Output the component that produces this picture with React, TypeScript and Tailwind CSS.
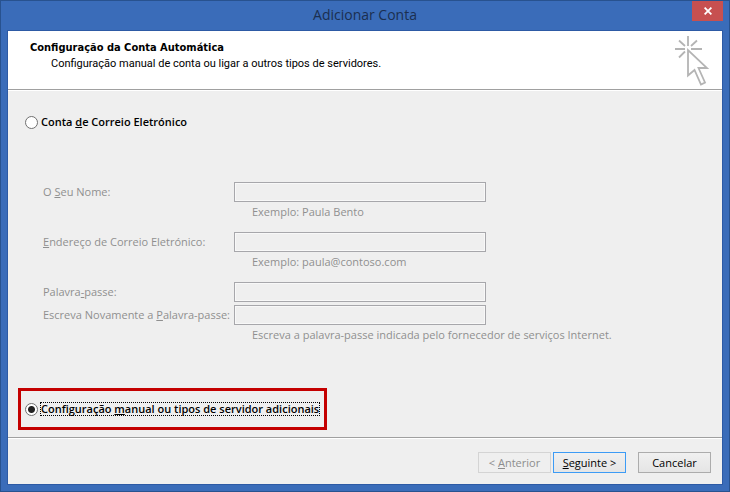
import { useState } from 'react';
import type { ReactNode } from 'react';

const ClickIcon = () => (
    <svg className="w-9 h-[52px]" viewBox="0 0 36 52" fill="none" stroke="#b4b4b4" strokeWidth="1.800" aria-hidden="true">
        <path d="M14 1v10M1 14h10M17 14h11M5 5.500l6 5.500M23 5.500l-6 5.500M5 22.500l6-6" />
        <path d="M14 15v25.500l6.500-5.500 6.500 14.500 4-2-6.500-14.500h8.500z" />
    </svg>
);

const CloseIcon = () => (
    <svg className="w-2 h-2" viewBox="0 0 8 8" stroke="#fff" strokeWidth="1.800" aria-hidden="true">
        <path d="M.6.6l6.800 6.800M7.400.6L.6 7.400" />
    </svg>
);

interface FieldProps {
    id: string;
    label: ReactNode;
    type?: string;
    hint?: string;
}

const Field = ({ id, label, type = 'text', hint }: FieldProps) => (
    <div className="grid grid-cols-[191px_252px_1fr] auto-rows-[20px] items-center whitespace-nowrap">
        <label htmlFor={id}>{label}</label>
        <input
            id={id}
            type={type}
            disabled
            className="h-5 w-full border border-[#a7a7ab] bg-[#efefef] px-1 shadow-[inset_0_0_0_1px_#f8f8f8]"
        />
        {hint && <p className="col-start-2 col-span-2 pl-[18px]">{hint}</p>}
    </div>
);

const radioClass =
    'appearance-none size-[13px] shrink-0 rounded-full border border-[#707070] bg-white checked:bg-[radial-gradient(circle,#222_0_3px,#fff_4px)]';

export default function App() {
    const [mode, setMode] = useState('manual');

    return (
        <div className="min-h-screen flex flex-col border border-[#28528f] bg-[#3a6cb9] px-[6px] pb-[6px] font-['Open_Sans',sans-serif] text-[11px] leading-4 text-black">
            {/* Barra de título */}
            <header className="grid grid-cols-[31px_1fr_31px] h-[29px] items-start">
                <h1 className="col-start-2 pt-1 text-center text-[14px] leading-5 text-[#1b2f50]">Adicionar Conta</h1>
                <button type="button" aria-label="Fechar" className="flex h-5 w-[31px] items-center justify-center bg-[#c75050]">
                    <CloseIcon />
                </button>
            </header>

            <main className="flex flex-1 flex-col border border-[#2d5aa5] bg-[#efefef]">
                <div className="flex h-[58px] justify-between bg-white pl-[22px] pr-3">
                    <div className="pt-[9px]">
                        <h2 className="font-['DejaVu_Sans_Condensed','DejaVu_Sans',sans-serif] font-bold">Configuração da Conta Automática</h2>
                        <p className="pl-[21px] font-['Roboto',sans-serif]">Configuração manual de conta ou ligar a outros tipos de servidores.</p>
                    </div>
                    <div className="pt-1">
                        <ClickIcon />
                    </div>
                </div>
                <hr className="border-t border-[#a0a0a0]" />
                <hr className="border-t border-white" />

                <form className="flex flex-1 flex-col">
                    <label className="mt-[21px] ml-[17px] flex h-5 items-center gap-[3px] font-semibold">
                        <input type="radio" name="modo" className={radioClass} checked={mode === 'email'} onChange={() => setMode('email')} />
                        <span>Conta <u>d</u>e Correio Eletrónico</span>
                    </label>

                    <div className="mt-[50px] ml-[35px] flex flex-col gap-[10px] text-[#8f8f8f]">
                        <Field id="nome" label={<>O <u>S</u>eu Nome:</>} hint="Exemplo: Paula Bento" />
                        <Field id="email" type="email" label={<><u>E</u>ndereço de Correio Eletrónico:</>} hint="Exemplo: paula@contoso.com" />
                        <div className="flex flex-col gap-[3px]">
                            <Field id="senha" type="password" label={<>Palavra<u>-</u>passe:</>} />
                            <Field
                                id="senha2"
                                type="password"
                                label={<>Escreva Novamente a <u>P</u>alavra-passe:</>}
                                hint="Escreva a palavra-passe indicada pelo fornecedor de serviços Internet."
                            />
                        </div>
                    </div>

                    <div className="mt-auto mb-[7px] ml-[10px] self-start border-[3px] border-[#c40000] py-[11px] px-1">
                        <label className="flex items-center gap-[2px] font-semibold">
                            <input type="radio" name="modo" className={radioClass} checked={mode === 'manual'} onChange={() => setMode('manual')} />
                            <span className="h-[14px] border border-dotted border-black leading-3">
                                Configuração <u>m</u>anual ou tipos de servidor adicionais
                            </span>
                        </label>
                    </div>
                </form>

                <hr className="border-t border-[#a0a0a0]" />
                <hr className="border-t border-white" />
                <footer className="flex h-[45px] justify-end pt-[13px] pr-[11px]">
                    <button type="button" disabled className="h-[21px] w-[73px] border border-[#d4d4d4] text-[#8d8d8d]">
                        &lt; <u>A</u>nterior
                    </button>
                    <button type="button" className="ml-[2px] h-[21px] w-[73px] border border-[#3c9bf5] bg-linear-to-b from-[#f0f0f0] to-[#e5e5e5]">
                        <u>S</u>eguinte &gt;
                    </button>
                    <button type="button" className="ml-3 h-[21px] w-[73px] border border-[#acacac] bg-linear-to-b from-[#f0f0f0] to-[#e5e5e5]">
                        Cancelar
                    </button>
                </footer>
            </main>
        </div>
    );
}
